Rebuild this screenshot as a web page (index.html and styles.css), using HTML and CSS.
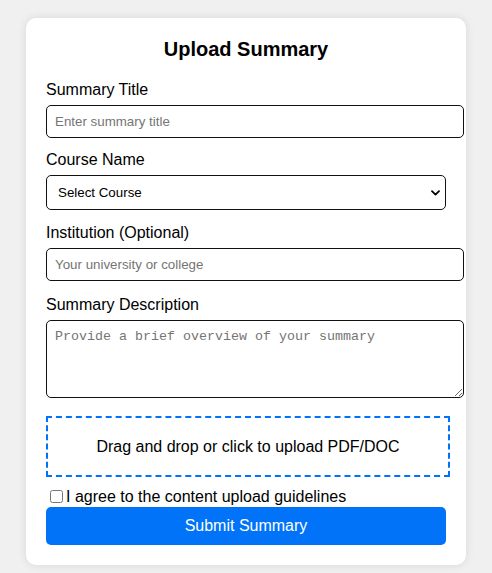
FILE: index.html
```html
<!DOCTYPE html>
<html lang="en">
<head>
<meta charset="utf-8">
<title>Upload Summary</title>
<link rel="stylesheet" href="styles.css">
</head>
<body>
<div class="card">
  <h2 class="title">Upload Summary</h2>
  <form class="form">
    <div class="field">
      <label class="label" for="t">Summary Title</label>
      <input class="input" id="t" type="text" placeholder="Enter summary title">
    </div>
    <div class="field field-course">
      <label class="label" for="c">Course Name</label>
      <div class="select-wrap">
        <select class="select" id="c">
          <option>Select Course</option>
        </select>
        <svg class="chevron" width="9" height="6" viewBox="0 0 9 6" aria-hidden="true"><path d="M1 1.2 L4.5 4.6 L8 1.2" fill="none" stroke="#000" stroke-width="1.8" stroke-linecap="round" stroke-linejoin="round"/></svg>
      </div>
    </div>
    <div class="field field-inst">
      <label class="label" for="i">Institution (Optional)</label>
      <input class="input" id="i" type="text" placeholder="Your university or college">
    </div>
    <div class="field field-area">
      <label class="label" for="d">Summary Description</label>
      <textarea class="input area" id="d" placeholder="Provide a brief overview of your summary"></textarea>
    </div>
    <div class="drop">Drag and drop or click to upload PDF/DOC</div>
    <div class="agree"><input class="check" type="checkbox" id="a"><label for="a">I agree to the content upload guidelines</label></div>
    <button class="submit" type="button">Submit Summary</button>
  </form>
</div>
</body>
</html>
```

FILE: styles.css
```css
html, body {
  margin: 0;
}
body {
  background: #f0f0f0;
  font-family: "Liberation Sans", Arial, sans-serif;
  padding: 18px 0;
}
.card {
  width: 400px;
  margin: 0 auto;
  padding: 20px;
  background: #fff;
  border-radius: 10px;
  box-shadow: 0 0 10px rgba(0, 0, 0, 0.1);
}
.title {
  margin: 0 0 20px;
  font-size: 20px;
  line-height: 23px;
  font-weight: bold;
  text-align: center;
  color: #000;
}
.form {
  display: flex;
  flex-direction: column;
}
.field {
  display: flex;
  flex-direction: column;
  align-items: flex-start;
  margin-bottom: 13px;
}
.field-course {
  margin-bottom: 14px;
}
.field-inst {
  margin-bottom: 15px;
}
.field-area {
  margin-bottom: 18px;
}
.label {
  font-size: 16px;
  line-height: 18px;
  color: #000;
  margin-bottom: 6px;
}
.input {
  box-sizing: content-box;
  width: 100%;
  height: 15px;
  padding: 8px;
  margin: 0;
  border: 1px solid #111;
  border-radius: 5px;
  font-family: "Liberation Sans", Arial, sans-serif;
  font-size: 13.333px;
  line-height: 15px;
  color: #000;
  background: #fff;
  outline: none;
}
.input::placeholder {
  color: #757575;
}
.area {
  height: 60px;
  font-family: "Liberation Mono", "Courier New", monospace;
  resize: vertical;
}
.select-wrap {
  position: relative;
  width: 100%;
}
.select {
  appearance: none;
  -webkit-appearance: none;
  box-sizing: border-box;
  width: 100%;
  height: 35px;
  margin: 0;
  padding: 0 11px;
  border: 1px solid #111;
  border-radius: 5px;
  background: #fff;
  font-family: "Liberation Sans", Arial, sans-serif;
  font-size: 13.333px;
  color: #000;
}
.chevron {
  position: absolute;
  right: 6px;
  top: 15px;
  pointer-events: none;
}
.drop {
  border: 2px dashed #0073f8;
  padding: 20px 0;
  width: 100%;
  text-align: center;
  font-size: 16px;
  line-height: 17px;
  color: #000;
  margin-bottom: 10px;
}
.agree {
  display: flex;
  align-items: center;
  font-size: 16px;
  line-height: 18px;
  color: #000;
  margin-bottom: 1px;
}
.check {
  width: 13px;
  height: 13px;
  margin: 3px 3px 3px 4px;
}
.submit {
  width: 100%;
  padding: 10px;
  border: none;
  border-radius: 5px;
  background: #0073f8;
  color: #fff;
  font-family: "Liberation Sans", Arial, sans-serif;
  font-size: 16px;
  line-height: 18px;
}
```
